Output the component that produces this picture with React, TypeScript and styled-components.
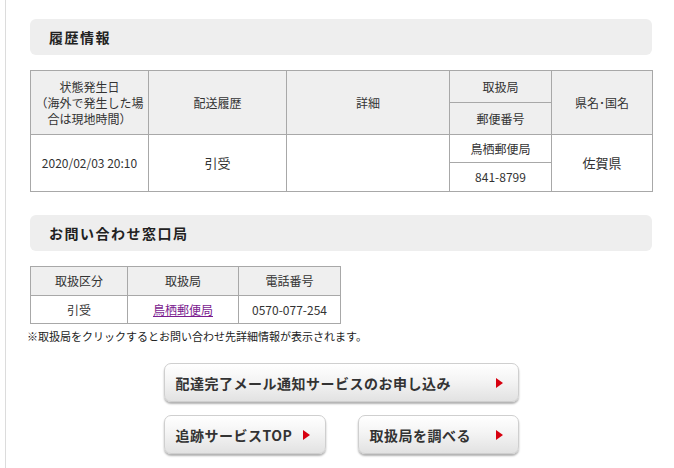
import React from "react";
import styled, { createGlobalStyle } from "styled-components";

const GlobalStyle = createGlobalStyle`
  html, body {
    margin: 0;
    padding: 0;
    background: #fff;
  }
  body {
    font-family: "Noto Sans CJK JP", "Liberation Sans", sans-serif;
    color: #333;
  }
`;

type Row = {
  date: string;
  status: string;
  detail: string;
  office: string;
  zip: string;
  pref: string;
};

const history: Row[] = [
  {
    date: "2020/02/03 20:10",
    status: "引受",
    detail: "",
    office: "鳥栖郵便局",
    zip: "841-8799",
    pref: "佐賀県",
  },
];

function App() {
  return (
    <>
      <GlobalStyle />
      <Page>
        <Content>
          <Heading>履歴情報</Heading>
          <HistoryTable>
            <colgroup>
              <col style={{ width: 118 }} />
              <col style={{ width: 138 }} />
              <col style={{ width: 163 }} />
              <col style={{ width: 102 }} />
              <col style={{ width: 101 }} />
            </colgroup>
            <thead>
              <tr>
                <Th rowSpan={2} $tight>
                  状態発生日
                  <br />
                  （海外で発生した場
                  <br />
                  合は現地時間）
                </Th>
                <Th rowSpan={2}>配送履歴</Th>
                <Th rowSpan={2}>詳細</Th>
                <Th $h={32}>取扱局</Th>
                <Th rowSpan={2}>県名･国名</Th>
              </tr>
              <tr>
                <Th $h={32}>郵便番号</Th>
              </tr>
            </thead>
            <tbody>
              {history.map((r, i) => (
                <React.Fragment key={i}>
                  <tr>
                    <Td rowSpan={2}>{r.date}</Td>
                    <Td rowSpan={2} $big>
                      {r.status}
                    </Td>
                    <Td rowSpan={2}>{r.detail}</Td>
                    <Td $h={28}>{r.office}</Td>
                    <Td rowSpan={2} $big>
                      {r.pref}
                    </Td>
                  </tr>
                  <tr>
                    <Td $h={29}>{r.zip}</Td>
                  </tr>
                </React.Fragment>
              ))}
            </tbody>
          </HistoryTable>

          <Heading $top={23}>お問い合わせ窓口局</Heading>
          <ContactTable>
            <colgroup>
              <col style={{ width: 97 }} />
              <col style={{ width: 111 }} />
              <col style={{ width: 102 }} />
            </colgroup>
            <thead>
              <tr>
                <Th $h={29}>取扱区分</Th>
                <Th $h={29}>取扱局</Th>
                <Th $h={29}>電話番号</Th>
              </tr>
            </thead>
            <tbody>
              <tr>
                <Td $h={28}>引受</Td>
                <Td $h={28}>
                  <OfficeLink href="#">鳥栖郵便局</OfficeLink>
                </Td>
                <Td $h={28}>0570-077-254</Td>
              </tr>
            </tbody>
          </ContactTable>
          <Note>※取扱局をクリックするとお問い合わせ先詳細情報が表示されます。</Note>

          <Buttons>
            <Button $w={355}>
              配達完了メール通知サービスのお申し込み
              <Arrow />
            </Button>
            <ButtonRow>
              <Button $w={162}>
                追跡サービスTOP
                <Arrow />
              </Button>
              <Button $w={161}>
                取扱局を調べる
                <Arrow />
              </Button>
            </ButtonRow>
          </Buttons>
        </Content>
      </Page>
    </>
  );
}

const Page = styled.div`
  margin-left: 5px;
  border-left: 1px solid #dcdcdc;
  min-height: 468px;
  box-sizing: border-box;
`;

const Content = styled.div`
  width: 622px;
  padding: 19px 0 0 24px;
`;

const Heading = styled.h2<{ $top?: number }>`
  margin: ${(p) => p.$top || 0}px 0 15px;
  height: 36px;
  line-height: 36px;
  padding-left: 19px;
  background: #eeeeee;
  border-radius: 6px;
  font-size: 14px;
  font-weight: bold;
  letter-spacing: 1.5px;
  color: #222;
`;

const HistoryTable = styled.table`
  width: 622px;
  border-collapse: collapse;
  table-layout: fixed;
  font-size: 12px;
`;

const ContactTable = styled(HistoryTable)`
  width: 310px;
`;

const Th = styled.th<{ $h?: number; $tight?: boolean }>`
  background: #efefef;
  border: 1px solid #a8a8a8;
  font-weight: normal;
  font-size: 12px;
  line-height: 16px;
  color: #333;
  padding: 0 ${(p) => (p.$tight ? 0 : 12)}px;
  white-space: ${(p) => (p.$tight ? "nowrap" : "normal")};
  height: ${(p) => (p.$h ? `${p.$h - 1}px` : "auto")};
  text-align: center;
  vertical-align: middle;
`;

const Td = styled.td<{ $h?: number; $big?: boolean }>`
  border: 1px solid #a8a8a8;
  font-size: ${(p) => (p.$big ? "13px" : "12px")};
  line-height: 16px;
  color: #333;
  padding: 0 4px;
  height: ${(p) => (p.$h ? `${p.$h - 1}px` : "auto")};
  text-align: center;
  vertical-align: middle;
`;

const OfficeLink = styled.a`
  color: #7b1c8f;
  text-decoration: underline;
`;

const Note = styled.p`
  margin: 4px 0 0 -3px;
  font-size: 11px;
  line-height: 16px;
  color: #222;
`;

const Buttons = styled.div`
  display: flex;
  flex-direction: column;
  align-items: center;
  gap: 13px;
  margin-top: 19px;
`;

const ButtonRow = styled.div`
  display: flex;
  gap: 32px;
`;

const Button = styled.div<{ $w: number }>`
  width: ${(p) => p.$w}px;
  height: 39px;
  box-sizing: border-box;
  display: flex;
  align-items: center;
  justify-content: space-between;
  padding: 0 15px 0 11px;
  border: 1px solid #cfcfcf;
  border-radius: 7px;
  background: linear-gradient(#ffffff 0%, #f4f4f4 45%, #e2e2e2 100%);
  box-shadow: 0 2px 2px rgba(0, 0, 0, 0.3);
  font-size: 14px;
  font-weight: bold;
  letter-spacing: 0.5px;
  color: #333;
  cursor: pointer;
`;

const Arrow = styled.span`
  width: 0;
  height: 0;
  border-top: 5px solid transparent;
  border-bottom: 5px solid transparent;
  border-left: 7px solid #d7000f;
`;

export default App;
